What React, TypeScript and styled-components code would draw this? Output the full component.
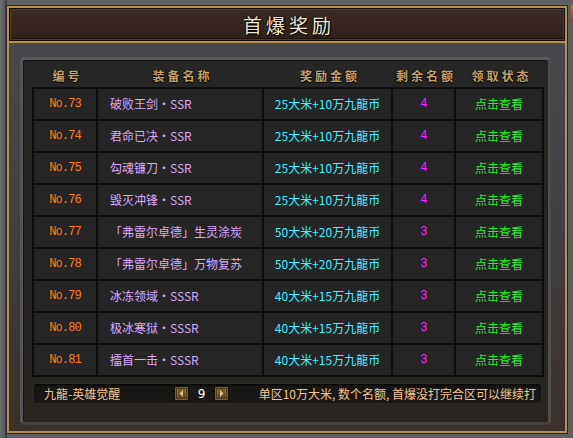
import React from "react";
import styled, { createGlobalStyle } from "styled-components";

const Global = createGlobalStyle`
  html, body { margin: 0; padding: 0; }
  body {
    width: 573px;
    height: 438px;
    overflow: hidden;
    background: #5d5e60;
    font-family: "Noto Sans CJK SC", "Noto Sans", sans-serif;
  }
`;

const Page = styled.div`
  position: relative;
  width: 573px;
  height: 438px;
  box-sizing: border-box;
  padding: 6px 6px 5px 7px;
  background: linear-gradient(90deg, #6c6d6f 0px, #555658 5px, #2c2c2c 6px, #5d5e60 7px);
`;

const CloseSliver = styled.div`
  position: absolute;
  right: 0;
  top: 5px;
  width: 2px;
  height: 18px;
  background: linear-gradient(#e0683a, #a8321a);
`;

const Frame = styled.div`
  width: 560px;
  height: 427px;
  box-sizing: border-box;
  border: 2px solid #b48f4f;
  box-shadow: 0 0 0 1px #2a2624;
  display: flex;
  flex-direction: column;
`;

const TitleBar = styled.div`
  height: 35px;
  box-sizing: border-box;
  border-bottom: 2px solid #b48f4f;
  background: linear-gradient(180deg, #3c2a24 0%, #36251f 60%, #2d1f1a 100%);
  box-shadow: inset 0 0 0 1px #140d0a, inset 0 0 0 2px #4b3a33, inset 0 -2px 0 1px #1a110d;
  display: flex;
  align-items: center;
  justify-content: center;
`;

const Title = styled.h1`
  margin: 0 0 0 4px;
  font-size: 19px;
  font-weight: 400;
  letter-spacing: 4px;
  color: #efe6d4;
  text-shadow: 1px 1px 1px #000, 0 0 3px #000;
  line-height: 1;
`;

const Body = styled.div`
  flex: 1;
  box-sizing: border-box;
  padding: 14px 14px 6px 11px;
  background: linear-gradient(180deg, #46484c 0%, #404145 45%, #3d3733 75%, #3b312a 100%);
  display: flex;
`;

const Panel = styled.div`
  flex: 1;
  box-sizing: border-box;
  border: 3px solid;
  border-color: #585b5f #4f4e4d #463f39 #54565a;
  border-radius: 5px;
  background: linear-gradient(180deg, #262626 0%, #242322 80%, #2a2520 100%);
  box-shadow: inset 1px 1px 1px #161616;
  padding: 0 4px 0 9px;
  display: flex;
  flex-direction: column;
`;

const COLS = "64px 166px 129px 63px 88px";

const HeaderRow = styled.div`
  display: grid;
  grid-template-columns: ${COLS};
  padding-left: 2px;
  height: 27px;
  box-sizing: border-box;
  padding-top: 9px;
`;

const HeaderCell = styled.div`
  text-align: center;
  font-size: 12px;
  font-weight: 700;
  line-height: 14px;
  letter-spacing: 3px;
  padding-left: 3px;
  color: #c4a16a;
  text-shadow: 0 1px 1px #000, 0 0 2px #000;
`;

const Grid = styled.div`
  display: grid;
  grid-template-columns: ${COLS};
  grid-auto-rows: 32px;
  border-top: 2px solid #0e0e0e;
  border-left: 2px solid #0e0e0e;
  width: 512px;
  box-sizing: border-box;
`;

const Cell = styled.div<{ $color: string; $align?: string; $mono?: boolean }>`
  box-sizing: border-box;
  border-right: 2px solid #0e0e0e;
  border-bottom: 2px solid #0e0e0e;
  background: #252525;
  display: flex;
  align-items: center;
  justify-content: ${(p) => p.$align || "center"};
  padding-left: ${(p) => (p.$align === "flex-start" ? "12px" : "0")};
  color: ${(p) => p.$color};
  font-size: 12px;
  line-height: 1;
  white-space: nowrap;
  font-family: ${(p) => (p.$mono ? '"Liberation Mono", monospace' : '"Noto Sans CJK SC", sans-serif')};
  letter-spacing: ${(p) => (p.$mono ? "-0.9px" : "0")};
`;

const Footer = styled.div`
  margin: 6px 0 0 1px;
  width: 509px;
  height: 21px;
  box-sizing: border-box;
  border-radius: 4px;
  background: #191715;
  border: 1px solid #2e2a26;
  box-shadow: inset 0 1px 2px #000;
  display: flex;
  align-items: center;
  padding: 0 5px 0 10px;
  color: #f2c58d;
  font-size: 12px;
`;

const ServerName = styled.div`
  width: 130px;
  white-space: nowrap;
`;

const Pager = styled.div`
  display: flex;
  align-items: center;
`;

const PageBtn = styled.div`
  width: 15px;
  height: 15px;
  box-sizing: border-box;
  border: 1px solid #14100a;
  border-radius: 2px;
  background: linear-gradient(180deg, #a8884a, #5e4620);
  box-shadow: inset 0 0 0 1px #7c6232, inset 0 0 0 2px #4a3818;
  display: flex;
  align-items: center;
  justify-content: center;
`;

const PageNum = styled.div`
  width: 25px;
  text-align: center;
  color: #ffffff;
  font-size: 12px;
  font-family: "DejaVu Sans", sans-serif;
`;

const Note = styled.div`
  flex: 1;
  text-align: right;
  white-space: nowrap;
`;

type Row = { no: number; name: string; reward: string; left: number };

const rows: Row[] = [
  { no: 73, name: "破败王剑・SSR", reward: "25大米+10万九龍币", left: 4 },
  { no: 74, name: "君命已决・SSR", reward: "25大米+10万九龍币", left: 4 },
  { no: 75, name: "勾魂镰刀・SSR", reward: "25大米+10万九龍币", left: 4 },
  { no: 76, name: "毁灭冲锋・SSR", reward: "25大米+10万九龍币", left: 4 },
  { no: 77, name: "「弗雷尔卓德」生灵涂炭", reward: "50大米+20万九龍币", left: 3 },
  { no: 78, name: "「弗雷尔卓德」万物复苏", reward: "50大米+20万九龍币", left: 3 },
  { no: 79, name: "冰冻领域・SSSR", reward: "40大米+15万九龍币", left: 3 },
  { no: 80, name: "极冰寒狱・SSSR", reward: "40大米+15万九龍币", left: 3 },
  { no: 81, name: "擂首一击・SSSR", reward: "40大米+15万九龍币", left: 3 },
];

const Arrow = ({ dir }: { dir: "l" | "r" }) => (
  <svg width="7" height="9" viewBox="0 0 7 9">
    <rect x="0" y="0" width="7" height="9" fill="#3a2a12" opacity="0.35" />
    {dir === "l" ? (
      <polygon points="5,1 1.5,4.5 5,8" fill="#e2c488" />
    ) : (
      <polygon points="2,1 5.5,4.5 2,8" fill="#e2c488" />
    )}
  </svg>
);

export default function App() {
  return (
    <>
      <Global />
      <Page>
        <CloseSliver />
        <Frame>
          <TitleBar>
            <Title>首爆奖励</Title>
          </TitleBar>
          <Body>
            <Panel>
              <HeaderRow>
                <HeaderCell>编号</HeaderCell>
                <HeaderCell>装备名称</HeaderCell>
                <HeaderCell>奖励金额</HeaderCell>
                <HeaderCell>剩余名额</HeaderCell>
                <HeaderCell>领取状态</HeaderCell>
              </HeaderRow>
              <Grid>
                {rows.map((r) => (
                  <React.Fragment key={r.no}>
                    <Cell $color="#ff7d1a" $mono>
                      No.{r.no}
                    </Cell>
                    <Cell $color="#d9a8f8" $align="flex-start">
                      {r.name}
                    </Cell>
                    <Cell $color="#3cf0ff">{r.reward}</Cell>
                    <Cell $color="#ff22ff" $mono>
                      {r.left}
                    </Cell>
                    <Cell $color="#2af02a">点击查看</Cell>
                  </React.Fragment>
                ))}
              </Grid>
              <Footer>
                <ServerName>九龍-英雄觉醒</ServerName>
                <Pager>
                  <PageBtn>
                    <Arrow dir="l" />
                  </PageBtn>
                  <PageNum>9</PageNum>
                  <PageBtn>
                    <Arrow dir="r" />
                  </PageBtn>
                </Pager>
                <Note>单区10万大米, 数个名额, 首爆没打完合区可以继续打</Note>
              </Footer>
            </Panel>
          </Body>
        </Frame>
      </Page>
    </>
  );
}
